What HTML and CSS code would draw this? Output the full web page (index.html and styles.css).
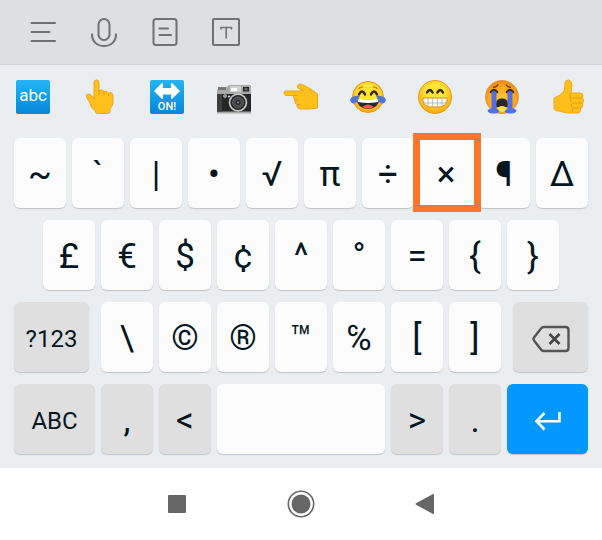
FILE: index.html
```html
<!DOCTYPE html>
<html lang="en">
<head>
  <meta charset="UTF-8">
  <title>Symbol keyboard</title>
  <meta name="viewport" content="width=device-width, initial-scale=1.0">
  <link rel="stylesheet" href="styles.css">
</head>
<body>
  <div class="toolbar">
    <button class="tool" aria-label="Menu">
      <svg width="32" height="32" viewBox="0 0 32 32"><path d="M4.500 7H28M4.500 16H22.500M4.500 25H28"/></svg>
    </button>
    <button class="tool" aria-label="Voice input">
      <svg width="32" height="32" viewBox="0 0 32 32"><rect x="10.500" y="3" width="11" height="21" rx="5.500"/><path d="M4 18.500C4 25.500 9 30 16 30S28 25.500 28 18.500"/></svg>
    </button>
    <button class="tool" aria-label="Clipboard">
      <svg width="32" height="32" viewBox="0 0 32 32"><rect x="4.500" y="3" width="23" height="26" rx="2.500"/><path d="M10.500 12.500H19M10.500 19H22"/></svg>
    </button>
    <button class="tool" aria-label="Text editing">
      <svg width="32" height="32" viewBox="0 0 32 32"><rect x="3" y="3" width="26" height="26" rx="1"/><path stroke-width="1.600" d="M11 13V11.500H21.500V13M16.200 11.500V22"/></svg>
    </button>
  </div>

  <div class="keyboard">
    <div class="emojis">
      <button class="emoji" aria-label="Input letters">
        <svg width="36" height="36" viewBox="0 0 36 36">
          <defs><linearGradient id="blue" x2="0" y2="1"><stop stop-color="#24b4f4"/><stop offset="1" stop-color="#0686d8"/></linearGradient></defs>
          <rect x="1" y="1" width="34" height="34" rx="2" fill="url(#blue)"/>
          <text class="abc" x="18" y="22" text-anchor="middle">abc</text>
        </svg>
      </button>
      <button class="emoji" aria-label="Pointing up">
        <svg width="36" height="36" viewBox="0 0 36 36">
          <path class="hand" d="M12 20V3.500Q12 1 14.500 1T17 3.500V12Q20 9.500 22 12.500Q25 11 26.500 14Q30.500 12.500 31 17V24Q30 28 28 30V32Q28 34.500 25.500 34.500H15.500Q13.500 34.500 13 31.500Q8 28 8 24L4.500 18Q4 14.500 7 15Q9 15 12 20Z"/>
          <path class="crease" d="M17 11V16M22 12.500V16M26.500 14V17"/>
        </svg>
      </button>
      <button class="emoji" aria-label="On arrow">
        <svg width="36" height="36" viewBox="0 0 36 36">
          <rect x="1" y="1" width="34" height="34" rx="2" fill="url(#blue)"/>
          <path fill="#fff" d="M5 12L13 4Q14 3.500 14 5V9H22V5Q22 3.500 23 4L31 12L23 20Q22 20.500 22 19V15.500H14V19Q14 20.500 13 20Z"/>
          <text class="on" x="18" y="31" text-anchor="middle">ON!</text>
        </svg>
      </button>
      <button class="emoji" aria-label="Camera">
        <svg width="36" height="36" viewBox="0 0 36 36">
          <path fill="#a7a8a8" d="M1 11L3 8H11L13 6H33Q35 6 35 8V34.500H1Z"/>
          <path fill="#d0d1d1" d="M14 7H25V13H14Z"/>
          <path fill="#777" d="M2 8H10V11H2Z"/>
          <path fill="#252626" d="M1 15H35V32.500H1Z"/>
          <path fill="#3d3e3e" d="M1 15H6V32.500H1Z"/>
          <rect x="15" y="9" width="6" height="3" fill="#fff"/>
          <rect x="27" y="8" width="6" height="4.500" fill="#242525"/>
          <rect x="28.500" y="9" width="3" height="2.500" fill="#606a70"/>
          <circle cx="9" cy="17" r="1.800" fill="#ddd"/><circle cx="9" cy="17" r=".8" fill="#444"/>
          <circle cx="13" cy="17.500" r="1" fill="#eee"/>
          <circle cx="22" cy="23.500" r="9.300" fill="#c8c9c9"/>
          <circle cx="22" cy="23.500" r="7.600" fill="#202121"/>
          <circle cx="22" cy="23.500" r="5.500" fill="#444" stroke="#777" stroke-width=".7"/>
          <circle cx="22" cy="23.500" r="3.200" fill="#252a2c" stroke="#6d7173" stroke-width=".6"/>
          <circle cx="22" cy="23.500" r="1" fill="#81919a"/>
        </svg>
      </button>
      <button class="emoji" aria-label="Pointing left">
        <svg width="36" height="36" viewBox="0 0 36 36">
          <path class="hand" d="M15 12H3Q1 12 1 14T3 16.500H10.500Q9.500 19 12 21Q11 24 14 25.500Q13.500 30 18 30H26L34.500 29V15L27 9.500L18 5Q15 4.500 14.500 7T17 10L19 12Z"/>
          <path class="crease" d="M10.500 16.500H15M12 21H15.500M14 25.500H17M17 10L20 12"/>
        </svg>
      </button>
      <button class="emoji" aria-label="Tears of joy">
        <svg width="36" height="36" viewBox="0 0 36 36">
          <defs><radialGradient id="face" cy=".4" r=".6"><stop offset=".5" stop-color="#fee433"/><stop offset="1" stop-color="#f8a514"/></radialGradient></defs>
          <circle cx="18" cy="18" r="15.500" fill="url(#face)" stroke="#e79a20"/>
          <path class="brow" d="M8.500 10Q10 8 13 8M23 8Q26 8 27.500 10"/>
          <path class="eye" d="M9 15.500Q12 9.500 15 15.500M21 15.500Q24 9.500 27 15.500"/>
          <path fill="#282828" d="M6.500 19.500Q18 22 29.500 19.500Q28.500 30 18 30T6.500 19.500Z"/>
          <path fill="#fff" d="M7 19.500Q18 21.500 29 19.500L28 23Q18 25 8 23Z"/>
          <path fill="#ed5951" d="M12 28Q18 23 24 28Q18 31.500 12 28Z"/>
          <path class="tear" d="M10 16.500Q3 16.500 1 19Q-1 22 2 24Q5 25.500 7.500 22.500ZM26 16.500Q33 16.500 35 19Q37 22 34 24Q31 25.500 28.500 22.500Z"/>
        </svg>
      </button>
      <button class="emoji" aria-label="Grinning">
        <svg width="36" height="36" viewBox="0 0 36 36">
          <circle cx="18" cy="18" r="16.500" fill="url(#face)" stroke="#e79a20"/>
          <path class="eye" d="M10 13.500Q12.800 8.500 15.600 13.500M20.400 13.500Q23.200 8.500 26 13.500"/>
          <path fill="#fff" stroke="#d98912" d="M7 19H29Q31 19 30 22Q28 28 22 28H14Q8 28 6 22Q5 19 7 19Z"/>
          <path fill="none" stroke="#aaa" stroke-width=".8" d="M6.500 24H29.500M11 19.500V27M15.700 19.500V27.500M20.300 19.500V27.500M25 19.500V27"/>
        </svg>
      </button>
      <button class="emoji" aria-label="Loudly crying">
        <svg width="36" height="36" viewBox="0 0 36 36">
          <defs><radialGradient id="sad" cy=".6" r=".6"><stop stop-color="#ffd02d"/><stop offset=".7" stop-color="#f9a51f"/><stop offset="1" stop-color="#ed8819"/></radialGradient></defs>
          <circle cx="18" cy="18" r="16.500" fill="url(#sad)" stroke="#dd841d" stroke-width=".7"/>
          <path class="brow dark" d="M9 8.500Q13 8 14 5.500M22 5.500Q23 8 27 8.500"/>
          <path class="eye" d="M7 13Q10 9 13 13M23 13Q26 9 29 13"/>
          <path fill="#282828" d="M12 28V25Q12 19.500 18 19.500T24 25V28Z"/>
          <path fill="#ffe14b" d="M13 31Q14 27 18 27T23 31Q18 35 13 31Z"/>
          <path class="tear" d="M7.500 12.500H12.500V29.500L15.500 32Q15 34 11 34.500Q5 35 3.500 32Q4 29.500 7.500 29.500ZM23.500 12.500H28.500V29.500Q32 29.500 32.500 32Q31 35 25 34.500Q21 34 20.500 32L23.500 29.500Z"/>
        </svg>
      </button>
      <button class="emoji" aria-label="Thumbs up">
        <svg width="36" height="36" viewBox="0 0 36 36">
          <path class="hand" d="M3 19Q10 17 13.500 11L14 4Q14.500 1 17.500 1Q21 2 21 6L20 14H29Q32 14 32 17Q31.500 18.500 31 19Q33.500 20 32.500 23L31 24Q32.500 26 31 28.500L29.500 29Q30.500 34 26 34H17Q11 33 8 32Q3 32 3 29Z"/>
          <path class="crease" d="M20 14Q18 16 19.500 19M31 19H21.500Q18.500 19 20 22.500M31 24H22Q19 25 21 28.500M29.500 29H22Q20 31 22 33.500"/>
        </svg>
      </button>
    </div>

    <div class="keys">
      <div class="row">
        <button class="key">~</button>
        <button class="key">`</button>
        <button class="key">|</button>
        <button class="key">•</button>
        <button class="key">√</button>
        <button class="key">π</button>
        <button class="key">÷</button>
        <button class="key marked">×</button>
        <button class="key">¶</button>
        <button class="key">Δ</button>
      </div>
      <div class="row inset">
        <button class="key">£</button>
        <button class="key">€</button>
        <button class="key">$</button>
        <button class="key">¢</button>
        <button class="key">^</button>
        <button class="key">°</button>
        <button class="key">=</button>
        <button class="key">{</button>
        <button class="key">}</button>
      </div>
      <div class="row">
        <button class="key gray label shift">?123</button>
        <button class="key">\</button>
        <button class="key">©</button>
        <button class="key">®</button>
        <button class="key">™</button>
        <button class="key">℅</button>
        <button class="key">[</button>
        <button class="key">]</button>
        <button class="key gray delete" aria-label="Delete">
          <svg width="40" height="28" viewBox="0 0 40 28"><path fill="none" stroke="#555" stroke-width="2.400" stroke-linejoin="round" d="M13 2H34.500Q37.500 2 37.500 5V23Q37.500 26 34.500 26H13Q11 26 10 24.500L3 15.500Q2 14 3 12.500L10 3.500Q11 2 13 2Z"/><path stroke="#444" stroke-width="2.600" d="M18.500 9L28.500 19M28.500 9L18.500 19"/></svg>
        </button>
      </div>
      <div class="row">
        <button class="key gray label mode">ABC</button>
        <button class="key gray">,</button>
        <button class="key gray">&lt;</button>
        <button class="key space" aria-label="Space"></button>
        <button class="key gray">&gt;</button>
        <button class="key gray">.</button>
        <button class="key mode enter" aria-label="Enter">
          <svg width="28" height="20" viewBox="0 0 28 20"><path fill="none" stroke="#fff" stroke-width="2.600" d="M25.500 1V10.200H2.500M10.500 2L2.500 10.200L10.500 18.500"/></svg>
        </button>
      </div>
    </div>
  </div>

  <div class="navbar">
    <button class="nav" aria-label="Recent apps">
      <svg width="32" height="32" viewBox="0 0 32 32"><rect x="7" y="7" width="18" height="18" rx="1"/></svg>
    </button>
    <button class="nav" aria-label="Home">
      <svg width="32" height="32" viewBox="0 0 32 32"><circle cx="16" cy="16" r="12.700" fill="none" stroke="#666" stroke-width="1.600"/><circle cx="16" cy="16" r="9.500"/></svg>
    </button>
    <button class="nav" aria-label="Back">
      <svg width="32" height="32" viewBox="0 0 32 32"><path d="M7 15.300L24 6Q25 5.500 25 7V25Q25 26.500 24 26L7 16.700Q6 16 7 15.300Z"/></svg>
    </button>
  </div>
</body>
</html>
```
FILE: styles.css
```css
body {
  margin: 0;
  font-family: Roboto, sans-serif;
  background-color: #fff;
}

button {
  padding: 0;
  border: none;
  background: none;
  font-family: inherit;
  color: #06171f;
  cursor: pointer;
}

svg {
  display: block;
}

.toolbar {
  display: flex;
  height: 64px;
  padding-left: 12px;
  background-color: #dedfe1;
  border-bottom: 1px solid #cdd3d8;
}

.tool {
  display: flex;
  width: 61px;
  align-items: center;
  justify-content: center;
}

.tool svg {
  fill: none;
  stroke: #707174;
  stroke-width: 2;
  stroke-linecap: round;
}

.keyboard {
  background-color: #eaeef1;
}

.emojis {
  display: flex;
  height: 64px;
}

.emoji {
  display: flex;
  flex: 1;
  align-items: center;
  justify-content: center;
}

.abc {
  fill: #fff;
  font-size: 17px;
}

.on {
  fill: #fff;
  font-size: 11px;
  font-weight: 500;
}

.hand {
  fill: #ffc01c;
  stroke: #efa51c;
  stroke-width: 1;
  stroke-linejoin: round;
}

.crease {
  fill: none;
  stroke: #e79a13;
  stroke-width: 1;
}

.eye {
  fill: none;
  stroke: #322720;
  stroke-width: 2.5;
  stroke-linecap: round;
}

.brow {
  fill: none;
  stroke: #dc901b;
  stroke-width: 1.5;
}

.dark {
  stroke: #76401a;
}

.tear {
  fill: #5270e6;
}

.keys {
  display: flex;
  flex-direction: column;
  gap: 12px;
  padding: 9px 14px 14px;
}

.row {
  display: flex;
  gap: 6px;
}

.inset {
  padding: 0 29px;
}

.key {
  display: flex;
  flex: 52 1 0;
  min-width: 0;
  height: 70px;
  align-items: center;
  justify-content: center;
  padding-top: 3px;
  border-radius: 6px;
  background-color: #fcfcfc;
  box-shadow: 0 1px 1px #bfc3c6;
  font-size: 35px;
}

.gray {
  background-color: #dfdfdf;
}

.label {
  font-size: 24px;
}

.shift {
  flex-grow: 75;
  margin-right: 6px;
}

.delete {
  flex-grow: 75;
  margin-left: 6px;
}

.mode {
  flex-grow: 81;
}

.space {
  flex-grow: 168;
}

.enter {
  background-color: #0398ff;
}

.marked {
  position: relative;
  border-radius: 0;
  box-shadow: 2px 0 0 #fcfcfc;
}

/* highlight frame overlaps the neighbouring keys */
.marked::after {
  content: "";
  position: absolute;
  z-index: 1;
  inset: -5px -9px -4px -7px;
  border: 7px solid #ff7629;
}

.navbar {
  display: flex;
  height: 72px;
  align-items: center;
  justify-content: center;
  gap: 92px;
}

.nav svg {
  fill: #666;
}
```
